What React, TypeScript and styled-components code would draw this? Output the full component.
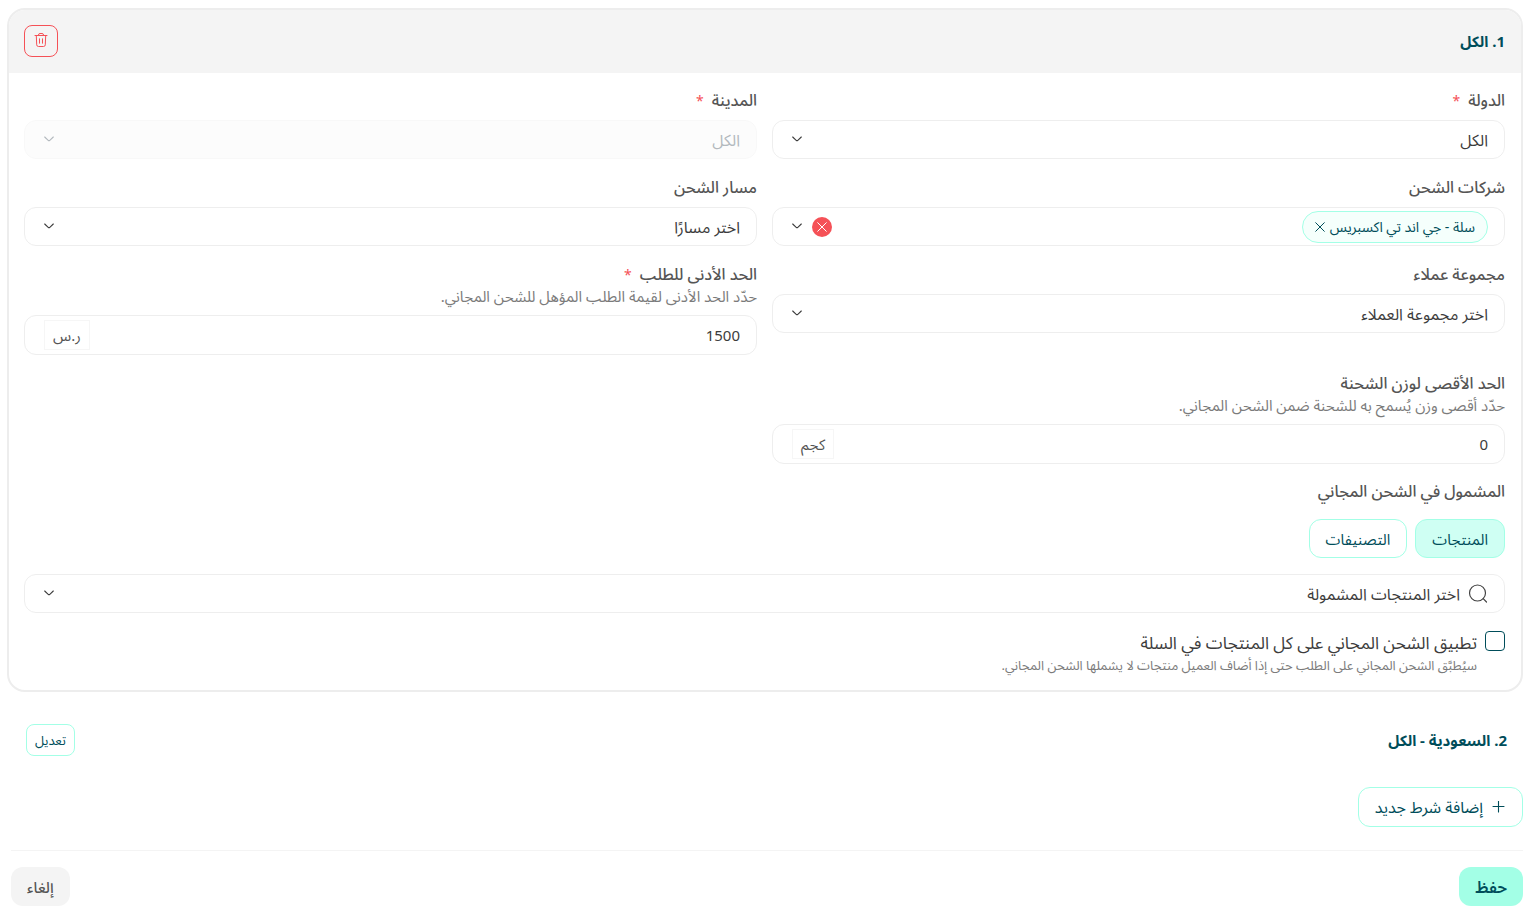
import React from 'react';
import type { ReactNode } from 'react';
import styled, { createGlobalStyle, css } from 'styled-components';

const color = {
  primary: '#a3ffe6',
  primaryMid: '#cffff3',
  primarySoft: '#f5fffc',
  ink: '#004d5a',
  text: '#3c3c3c',
  label: '#555555',
  hint: '#7b7b7b',
  line: '#eeeeee',
  surface: '#f4f4f4',
  danger: '#f55157',
};

const GlobalStyle = createGlobalStyle`
  *, *::before, *::after { box-sizing: border-box; }
  body {
    margin: 0;
    background: #fff;
    color: ${color.text};
    font-family: 'Noto Sans', 'Noto Sans Arabic', 'DejaVu Sans', sans-serif;
    font-size: 15px;
    line-height: 24px;
  }
  button, input, select { font: inherit; color: inherit; }
  button { cursor: pointer; }
`;

const Page = styled.main`
  padding: 8px 10px 12px 7px;
`;

const Card = styled.section`
  border: 2px solid #ededed;
  border-radius: 18px;
  overflow: hidden;
`;

const CardHeader = styled.header`
  display: flex;
  align-items: center;
  justify-content: space-between;
  padding: 15px 16px 16px 15px;
  background: ${color.surface};
`;

const CardBody = styled.div`
  padding: 15px 16px 14px 15px;
`;

const Title = styled.h2`
  margin: 0;
  font-size: 15px;
  line-height: 24px;
  font-weight: 700;
  color: ${color.ink};
`;

const DeleteButton = styled.button`
  display: flex;
  align-items: center;
  justify-content: center;
  width: 34px;
  height: 32px;
  padding: 0 0 2px;
  border: 1px solid ${color.danger};
  border-radius: 8px;
  background: transparent;
  color: ${color.danger};
`;

const FieldGrid = styled.div`
  display: grid;
  grid-template-columns: 1fr 1fr;
  gap: 16px 15px;
  align-items: start;
`;

const Field = styled.div`
  display: flex;
  flex-direction: column;
  min-width: 0;
`;

const labelText = css`
  font-size: 16px;
  line-height: 24px;
  font-weight: 500;
  color: ${color.label};
`;

const Label = styled.label`
  ${labelText}
`;

const Required = styled.span`
  margin-inline-start: 8px;
  color: ${color.danger};
  font-size: 14px;
  line-height: 16px;
  font-weight: 400;
`;

const Hint = styled.p`
  margin: 0;
  font-size: 15px;
  line-height: 21px;
  color: ${color.hint};
`;

const Control = styled.div<{ $disabled?: boolean; $tall?: boolean }>`
  display: flex;
  align-items: center;
  position: relative;
  height: ${(p) => (p.$tall ? 40 : 39)}px;
  border: 1px solid ${(p) => (p.$disabled ? '#f8f8f8' : color.line)};
  border-radius: 12px;
  background: ${(p) => (p.$disabled ? '#fcfcfc' : '#fff')};
  color: ${(p) => (p.$disabled ? '#b3b9be' : color.text)};
`;

const FieldControl = styled(Control)`
  margin-top: 8px;
`;

const NativeSelect = styled.select`
  flex: 1;
  min-width: 0;
  height: 100%;
  padding: 0 16px 0 48px;
  border: 0;
  border-radius: 12px;
  background: transparent;
  font-size: 16px;
  appearance: none;
  &:disabled { opacity: 1; }
`;

const TextInput = styled.input`
  flex: 1;
  min-width: 0;
  height: 100%;
  padding: 0 16px;
  border: 0;
  border-radius: 12px;
  background: transparent;
`;

const ChevronSlot = styled.span`
  position: absolute;
  inset-inline-end: 18px;
  top: 12px;
  display: flex;
  pointer-events: none;
`;

const Unit = styled.span`
  display: flex;
  align-items: center;
  height: 30px;
  margin-left: 19px;
  padding: 0 8px;
  border: 1px solid #f6f6f6;
  color: ${color.label};
`;

const Chip = styled.span`
  display: flex;
  align-items: center;
  gap: 5px;
  height: 32px;
  margin-inline-start: 16px;
  padding: 0 12px;
  border: 1px solid ${color.primary};
  border-radius: 16px;
  background: ${color.primarySoft};
  color: ${color.ink};
  font-size: 14px;
  line-height: 20px;
  white-space: nowrap;
`;

const ChipRemove = styled.button`
  display: flex;
  padding: 0;
  border: 0;
  background: none;
`;

const ClearButton = styled.button`
  display: flex;
  align-items: center;
  justify-content: center;
  flex: none;
  width: 20px;
  height: 20px;
  margin-left: 39px;
  padding: 0;
  border: 0;
  border-radius: 50%;
  background: ${color.danger};
  color: #fff;
`;

const IncludedGroup = styled.fieldset`
  margin: 15px 0 0;
  padding: 0;
  border: 0;
`;

const Legend = styled.legend`
  padding: 0;
  ${labelText}
`;

const ToggleRow = styled.div`
  display: flex;
  gap: 8px;
  margin: 16px 0;
`;

const Toggle = styled.button<{ $active?: boolean }>`
  height: 39px;
  padding: 0 16px;
  border: 1px solid ${color.primary};
  border-radius: 12px;
  background: ${(p) => (p.$active ? color.primaryMid : '#fff')};
  color: ${color.ink};
`;

const SearchIconSlot = styled.label`
  display: flex;
  padding-inline-start: 16px;
`;

const SearchSelect = styled(NativeSelect)`
  padding-right: 8px;
`;

const CheckRow = styled.div`
  display: flex;
  align-items: flex-start;
  gap: 8px;
  margin-top: 18px;
`;

const Checkbox = styled.input`
  appearance: none;
  flex: none;
  width: 20px;
  height: 20px;
  margin: 0;
  border: 1px solid ${color.ink};
  border-radius: 4px;
  background: #fff;
  &:checked { background: ${color.primary}; }
`;

const CheckLabel = styled.label`
  display: block;
  font-size: 17px;
  line-height: 24px;
`;

const CheckHint = styled(Hint)`
  font-size: 13px;
`;

const CollapsedRow = styled.section`
  display: flex;
  align-items: center;
  justify-content: space-between;
  padding: 32px 16px 31px 19px;
`;

const EditButton = styled.button`
  height: 32px;
  padding: 0 8px;
  border: 1px solid ${color.primary};
  border-radius: 8px;
  background: #fff;
  color: ${color.ink};
  font-size: 13px;
`;

const AddButton = styled.button`
  display: flex;
  align-items: center;
  gap: 8px;
  height: 40px;
  padding: 0 16px;
  border: 1px solid ${color.primary};
  border-radius: 12px;
  background: #fff;
  color: ${color.ink};
  font-size: 16px;
`;

const Footer = styled.footer`
  display: flex;
  justify-content: space-between;
  margin: 23px 0 0 4px;
  padding-top: 16px;
  border-top: 1px solid #f4f4f4;
`;

const FooterButton = styled.button<{ $primary?: boolean }>`
  height: 39px;
  padding: 0 16px;
  border: 0;
  border-radius: 12px;
  background: ${(p) => (p.$primary ? color.primary : color.surface)};
  color: ${(p) => (p.$primary ? color.ink : color.label)};
  font-size: ${(p) => (p.$primary ? 16 : 15)}px;
  font-weight: ${(p) => (p.$primary ? 600 : 500)};
`;

const Chevron = () => (
  <svg width="12" height="12" viewBox="0 0 12 12" fill="none" stroke="currentColor" strokeWidth="1.1" strokeLinecap="round" strokeLinejoin="round" aria-hidden="true">
    <path d="M1.7 4 5.2 7.3Q6 8 6.8 7.3L10.3 4" />
  </svg>
);

const Cross = ({ size }: { size: number }) => (
  <svg width={size} height={size} viewBox="0 0 10 10" fill="none" stroke="currentColor" strokeWidth="1" strokeLinecap="round" aria-hidden="true">
    <path d="M.7.7l8.6 8.6M9.3.7.7 9.3" />
  </svg>
);

const Trash = () => (
  <svg width="14" height="16" viewBox="0 0 14 16" fill="none" stroke="currentColor" strokeWidth="1" strokeLinecap="round" strokeLinejoin="round" aria-hidden="true">
    <path d="M1 3.5h12M4.5 3.5V3Q4.5 1.5 6 1.5h2Q9.5 1.5 9.5 3v.5M2.3 3.5 2.7 12.8Q2.8 14.5 4.5 14.5h5Q11.2 14.5 11.3 12.8L11.7 3.5M5.5 6.8v4.4M8.5 6.8v4.4" />
  </svg>
);

const Search = () => (
  <svg width="20" height="20" viewBox="0 0 20 20" fill="none" stroke="#444" strokeWidth="1.2" strokeLinecap="round" aria-hidden="true">
    <circle cx="9.5" cy="9" r="8" />
    <path d="m15.2 14.7 3.3 3.3" />
  </svg>
);

const Plus = () => (
  <svg width="15" height="12" viewBox="0 0 15 12" fill="none" stroke="currentColor" strokeWidth="1.1" strokeLinecap="round" aria-hidden="true">
    <path d="M2 5.5h11M7.5 0v11" />
  </svg>
);

type FieldProps = { id: string; label: string; required?: boolean; hint?: string; children: ReactNode };

const FormField = ({ id, label, required, hint, children }: FieldProps) => (
  <Field>
    <Label htmlFor={id}>
      {label}
      {required && <Required>*</Required>}
    </Label>
    {hint && <Hint id={`${id}-hint`}>{hint}</Hint>}
    {children}
  </Field>
);

const SelectControl = ({ id, value, disabled }: { id: string; value: string; disabled?: boolean }) => (
  <FieldControl $disabled={disabled}>
    <NativeSelect id={id} disabled={disabled} defaultValue={value}>
      <option value={value}>{value}</option>
    </NativeSelect>
    <ChevronSlot>
      <Chevron />
    </ChevronSlot>
  </FieldControl>
);

const NumberControl = ({ id, value, unit }: { id: string; value: string; unit: string }) => (
  <FieldControl $tall>
    <TextInput id={id} type="text" inputMode="numeric" defaultValue={value} aria-describedby={`${id}-hint`} />
    <Unit>{unit}</Unit>
  </FieldControl>
);

export default function App() {
  return (
    <Page dir="rtl" lang="ar">
      <GlobalStyle />
      <Card>
        <CardHeader>
          <Title>1. الكل</Title>
          <DeleteButton type="button" aria-label="حذف">
            <Trash />
          </DeleteButton>
        </CardHeader>
        <CardBody>
          <FieldGrid>
            <FormField id="country" label="الدولة" required>
              <SelectControl id="country" value="الكل" />
            </FormField>
            <FormField id="city" label="المدينة" required>
              <SelectControl id="city" value="الكل" disabled />
            </FormField>
            <FormField id="carriers" label="شركات الشحن">
              <FieldControl>
                <Chip>
                  سلة - جي اند تي اكسبريس
                  <ChipRemove type="button" aria-label="إزالة">
                    <Cross size={10} />
                  </ChipRemove>
                </Chip>
                <TextInput id="carriers" type="text" />
                <ClearButton type="button" aria-label="مسح الكل">
                  <Cross size={10} />
                </ClearButton>
                <ChevronSlot>
                  <Chevron />
                </ChevronSlot>
              </FieldControl>
            </FormField>
            <FormField id="route" label="مسار الشحن">
              <SelectControl id="route" value="اختر مسارًا" />
            </FormField>
            <FormField id="customers" label="مجموعة عملاء">
              <SelectControl id="customers" value="اختر مجموعة العملاء" />
            </FormField>
            <FormField id="minimum" label="الحد الأدنى للطلب" required hint="حدّد الحد الأدنى لقيمة الطلب المؤهل للشحن المجاني.">
              <NumberControl id="minimum" value="1500" unit="ر.س" />
            </FormField>
            <FormField id="weight" label="الحد الأقصى لوزن الشحنة" hint="حدّد أقصى وزن يُسمح به للشحنة ضمن الشحن المجاني.">
              <NumberControl id="weight" value="0" unit="كجم" />
            </FormField>
          </FieldGrid>

          <IncludedGroup>
            <Legend>المشمول في الشحن المجاني</Legend>
            <ToggleRow>
              <Toggle type="button" $active aria-pressed="true">المنتجات</Toggle>
              <Toggle type="button" aria-pressed="false">التصنيفات</Toggle>
            </ToggleRow>
            <Control>
              <SearchIconSlot htmlFor="products" aria-label="المنتجات المشمولة">
                <Search />
              </SearchIconSlot>
              <SearchSelect id="products" defaultValue="all">
                <option value="all">اختر المنتجات المشمولة</option>
              </SearchSelect>
              <ChevronSlot>
                <Chevron />
              </ChevronSlot>
            </Control>
          </IncludedGroup>

          <CheckRow>
            <Checkbox id="apply-all" type="checkbox" aria-describedby="apply-all-hint" />
            <div>
              <CheckLabel htmlFor="apply-all">تطبيق الشحن المجاني على كل المنتجات في السلة</CheckLabel>
              <CheckHint id="apply-all-hint">سيُطبَّق الشحن المجاني على الطلب حتى إذا أضاف العميل منتجات لا يشملها الشحن المجاني.</CheckHint>
            </div>
          </CheckRow>
        </CardBody>
      </Card>

      <CollapsedRow>
        <Title>2. السعودية - الكل</Title>
        <EditButton type="button">تعديل</EditButton>
      </CollapsedRow>

      <AddButton type="button">
        <Plus />
        إضافة شرط جديد
      </AddButton>

      <Footer>
        <FooterButton type="submit" $primary>حفظ</FooterButton>
        <FooterButton type="button">إلغاء</FooterButton>
      </Footer>
    </Page>
  );
}
